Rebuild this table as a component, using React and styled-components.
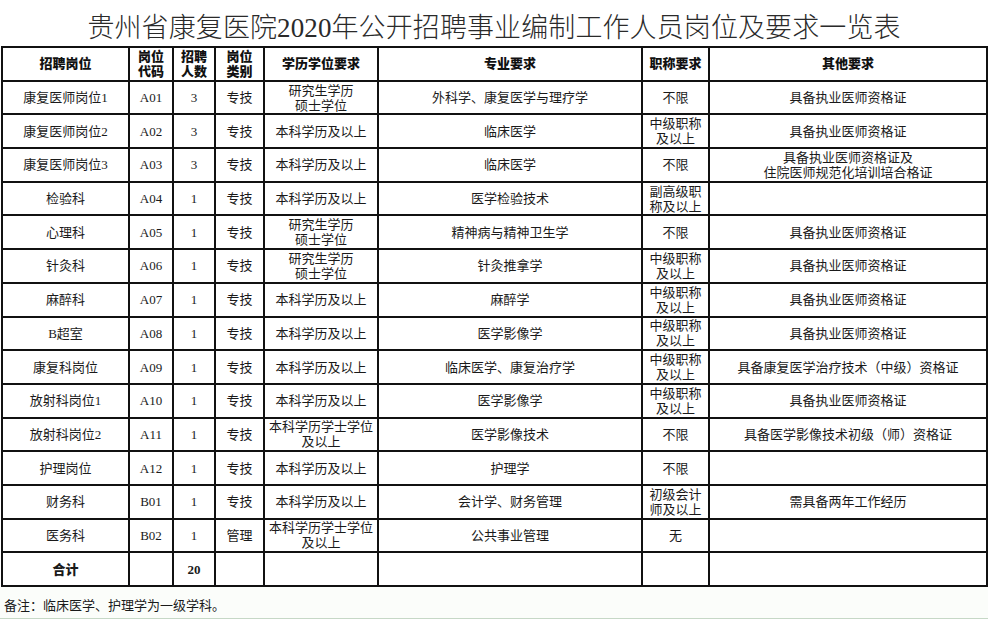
import styled, { createGlobalStyle } from 'styled-components';

const GlobalStyle = createGlobalStyle`
  html, body {
    margin: 0;
    padding: 0;
    background: #ffffff;
  }
  body {
    font-family: "Liberation Serif", "Noto Sans CJK SC", serif;
    color: #111;
  }
`;

const columns = [
  { title: ['招聘岗位'], width: 127 },
  { title: ['岗位', '代码'], width: 44 },
  { title: ['招聘', '人数'], width: 42 },
  { title: ['岗位', '类别'], width: 49 },
  { title: ['学历学位要求'], width: 114 },
  { title: ['专业要求'], width: 264 },
  { title: ['职称要求'], width: 67 },
  { title: ['其他要求'], width: 278 },
];

const UG = '本科学历及以上';
const PG = ['研究生学历', '硕士学位'];
const MID = ['中级职称', '及以上'];
const LIC = '具备执业医师资格证';

const rows = [
  ['康复医师岗位1', 'A01', '3', '专技', PG, '外科学、康复医学与理疗学', '不限', LIC],
  ['康复医师岗位2', 'A02', '3', '专技', UG, '临床医学', MID, LIC],
  ['康复医师岗位3', 'A03', '3', '专技', UG, '临床医学', '不限', ['具备执业医师资格证及', '住院医师规范化培训培合格证']],
  ['检验科', 'A04', '1', '专技', UG, '医学检验技术', ['副高级职', '称及以上'], ''],
  ['心理科', 'A05', '1', '专技', PG, '精神病与精神卫生学', '不限', LIC],
  ['针灸科', 'A06', '1', '专技', PG, '针灸推拿学', MID, LIC],
  ['麻醉科', 'A07', '1', '专技', UG, '麻醉学', MID, LIC],
  ['B超室', 'A08', '1', '专技', UG, '医学影像学', MID, LIC],
  ['康复科岗位', 'A09', '1', '专技', UG, '临床医学、康复治疗学', MID, '具备康复医学治疗技术（中级）资格证'],
  ['放射科岗位1', 'A10', '1', '专技', UG, '医学影像学', MID, LIC],
  ['放射科岗位2', 'A11', '1', '专技', ['本科学历学士学位', '及以上'], '医学影像技术', '不限', '具备医学影像技术初级（师）资格证'],
  ['护理岗位', 'A12', '1', '专技', UG, '护理学', '不限', ''],
  ['财务科', 'B01', '1', '专技', UG, '会计学、财务管理', ['初级会计', '师及以上'], '需具备两年工作经历'],
  ['医务科', 'B02', '1', '管理', ['本科学历学士学位', '及以上'], '公共事业管理', '无', ''],
];

function Lines({ value }) {
  const list = Array.isArray(value) ? value : [value];
  return list.map((line, i) => <Line key={i}>{line}</Line>);
}

export default function App() {
  return (
    <>
      <GlobalStyle />
      <Page>
        <Title>贵州省康复医院2020年公开招聘事业编制工作人员岗位及要求一览表</Title>
        <Table>
          <colgroup>
            {columns.map((c, i) => (
              <col key={i} style={{ width: c.width }} />
            ))}
          </colgroup>
          <thead>
            <tr>
              {columns.map((c, i) => (
                <HeadCell key={i}>
                  <Lines value={c.title} />
                </HeadCell>
              ))}
            </tr>
          </thead>
          <tbody>
            {rows.map((r, i) => (
              <tr key={i}>
                {r.map((v, j) => (
                  <Cell key={j}>
                    <Lines value={v} />
                  </Cell>
                ))}
              </tr>
            ))}
            <tr>
              <Cell $bold>合计</Cell>
              <Cell />
              <Cell $bold>20</Cell>
              <Cell />
              <Cell />
              <Cell />
              <Cell />
              <Cell />
            </tr>
          </tbody>
        </Table>
        <Note>备注：临床医学、护理学为一级学科。</Note>
      </Page>
    </>
  );
}

const Page = styled.div`
  width: 988px;
  height: 619px;
  box-sizing: border-box;
  display: flex;
  flex-direction: column;
  background: #ffffff;
  border-bottom: 1px solid #c6d8c6;
  overflow: hidden;
`;

const Title = styled.h1`
  margin: 0;
  height: 46px;
  display: flex;
  align-items: center;
  justify-content: center;
  padding-top: 4px;
  box-sizing: border-box;
  font-size: 27px;
  font-weight: 300;
  color: #2a2a2a;
  letter-spacing: 0.1px;
`;

const Table = styled.table`
  margin-left: 1px;
  width: 985px;
  table-layout: fixed;
  border-collapse: collapse;
  border: 2px solid #111;
  font-size: 13px;

  tr {
    height: 33.7px;
  }
`;

const HeadCell = styled.th`
  border: 2px solid #111;
  padding: 0;
  font-weight: 900;
  font-size: 13px;
  line-height: 15px;
  text-align: center;
  vertical-align: middle;
`;

const Cell = styled.td`
  border: 2px solid #111;
  padding: 0;
  font-weight: ${(p) => (p.$bold ? 900 : 400)};
  line-height: 15px;
  text-align: center;
  vertical-align: middle;
  color: #1a1a1a;
  white-space: nowrap;
`;

const Line = styled.div`
  display: block;
`;

const Note = styled.div`
  flex: 1;
  padding: 8px 0 0 4px;
  font-size: 13px;
  color: #1a1a1a;
  background: #fbfdfa;
`;
